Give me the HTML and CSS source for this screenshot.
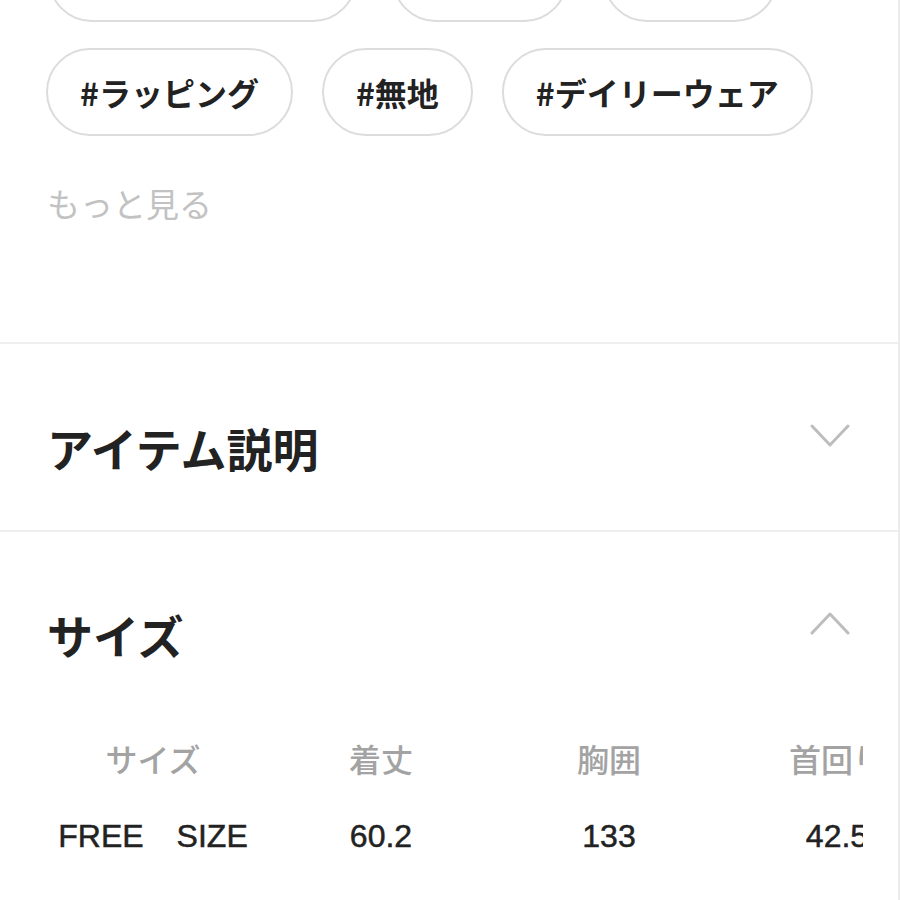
FILE: index.html
```html
<!DOCTYPE html>
<html lang="ja">
<head>
<meta charset="utf-8">
<link rel="stylesheet" href="styles.css">
</head>
<body>
<div class="page">
  <section class="tags">
    <div class="tag-row tag-row-top">
      <span class="tag tag-w1"></span>
      <span class="tag tag-w2"></span>
      <span class="tag tag-w3"></span>
    </div>
    <div class="tag-row">
      <span class="tag">#ラッピング</span>
      <span class="tag">#無地</span>
      <span class="tag">#デイリーウェア</span>
    </div>
    <div class="more">もっと見る</div>
  </section>

  <section class="acc acc-closed">
    <div class="acc-head">
      <h2 class="acc-title">アイテム説明</h2>
      <svg class="chev" width="40" height="24" viewBox="0 0 40 24"><path d="M2 2 L20 21 L38 2" fill="none" stroke="#bdbdbd" stroke-width="3" stroke-linecap="round" stroke-linejoin="round"/></svg>
    </div>
  </section>

  <section class="acc acc-open">
    <div class="acc-head">
      <h2 class="acc-title">サイズ</h2>
      <svg class="chev" width="40" height="24" viewBox="0 0 40 24"><path d="M2 22 L20 3 L38 22" fill="none" stroke="#bdbdbd" stroke-width="3" stroke-linecap="round" stroke-linejoin="round"/></svg>
    </div>
    <div class="table-wrap">
      <div class="size-table">
        <div class="th">サイズ</div>
        <div class="th">着丈</div>
        <div class="th">胸囲</div>
        <div class="th">首回り</div>
        <div class="td">FREE<span class="sp"></span>SIZE</div>
        <div class="td">60.2</div>
        <div class="td">133</div>
        <div class="td">42.5</div>
      </div>
    </div>
  </section>
</div>
</body>
</html>
```

FILE: styles.css
```css
html, body {
  margin: 0;
  padding: 0;
  background: #fff;
}

body {
  font-family: "Noto Sans CJK JP", "Noto Sans", sans-serif;
  color: #222;
  overflow: hidden;
}

.page {
  width: 898px;
  height: 900px;
  border-right: 2px solid #ececec;
  overflow: hidden;
}

.tags {
  margin-top: -66px;
  height: 410px;
  border-bottom: 2px solid #efefef;
  box-sizing: border-box;
}

.tag-row {
  display: flex;
  gap: 29px;
  padding-left: 46px;
  margin-bottom: 26px;
}

.tag-row-top {
  gap: 35px;
  padding-left: 48px;
}

.tag {
  box-sizing: border-box;
  height: 88px;
  padding: 0 32px;
  border: 2px solid #dcdcdc;
  border-radius: 44px;
  display: flex;
  align-items: center;
  justify-content: center;
  font-size: 32px;
  font-weight: 700;
  color: #222;
  white-space: nowrap;
}

.tag-w1 { width: 309px; }
.tag-w2 { width: 176px; }
.tag-w3 { width: 175px; }

.more {
  margin-top: 43px;
  padding-left: 47px;
  font-size: 33px;
  line-height: 48px;
  color: #c2c2c2;
}

.acc-closed {
  height: 188px;
  border-bottom: 2px solid #efefef;
  box-sizing: border-box;
}

.acc-head {
  display: flex;
  justify-content: space-between;
  align-items: flex-start;
  padding: 71px 48px 0 47px;
}

.acc-title {
  margin: 0;
  font-size: 46px;
  line-height: 64px;
  font-weight: 700;
  color: #222;
}

.chev {
  display: block;
  margin-top: 9px;
}

.acc-open .acc-head {
  padding-top: 70px;
}

.table-wrap {
  margin-left: 39px;
  width: 824px;
  overflow: hidden;
  margin-top: 67px;
}

.size-table {
  display: grid;
  grid-template-columns: repeat(4, 228px);
  grid-template-rows: 50px 50px;
  row-gap: 28px;
  width: 912px;
}

.th, .td {
  display: flex;
  align-items: center;
  justify-content: center;
  font-size: 32px;
  white-space: nowrap;
}

.th {
  color: #a3a3a3;
  font-weight: 500;
}

.td {
  font-family: "Liberation Sans", "Noto Sans CJK JP", sans-serif;
  color: #222;
  font-weight: 400;
  -webkit-text-stroke: 0.5px #222;
}

.sp {
  display: inline-block;
  width: 33px;
}
```
